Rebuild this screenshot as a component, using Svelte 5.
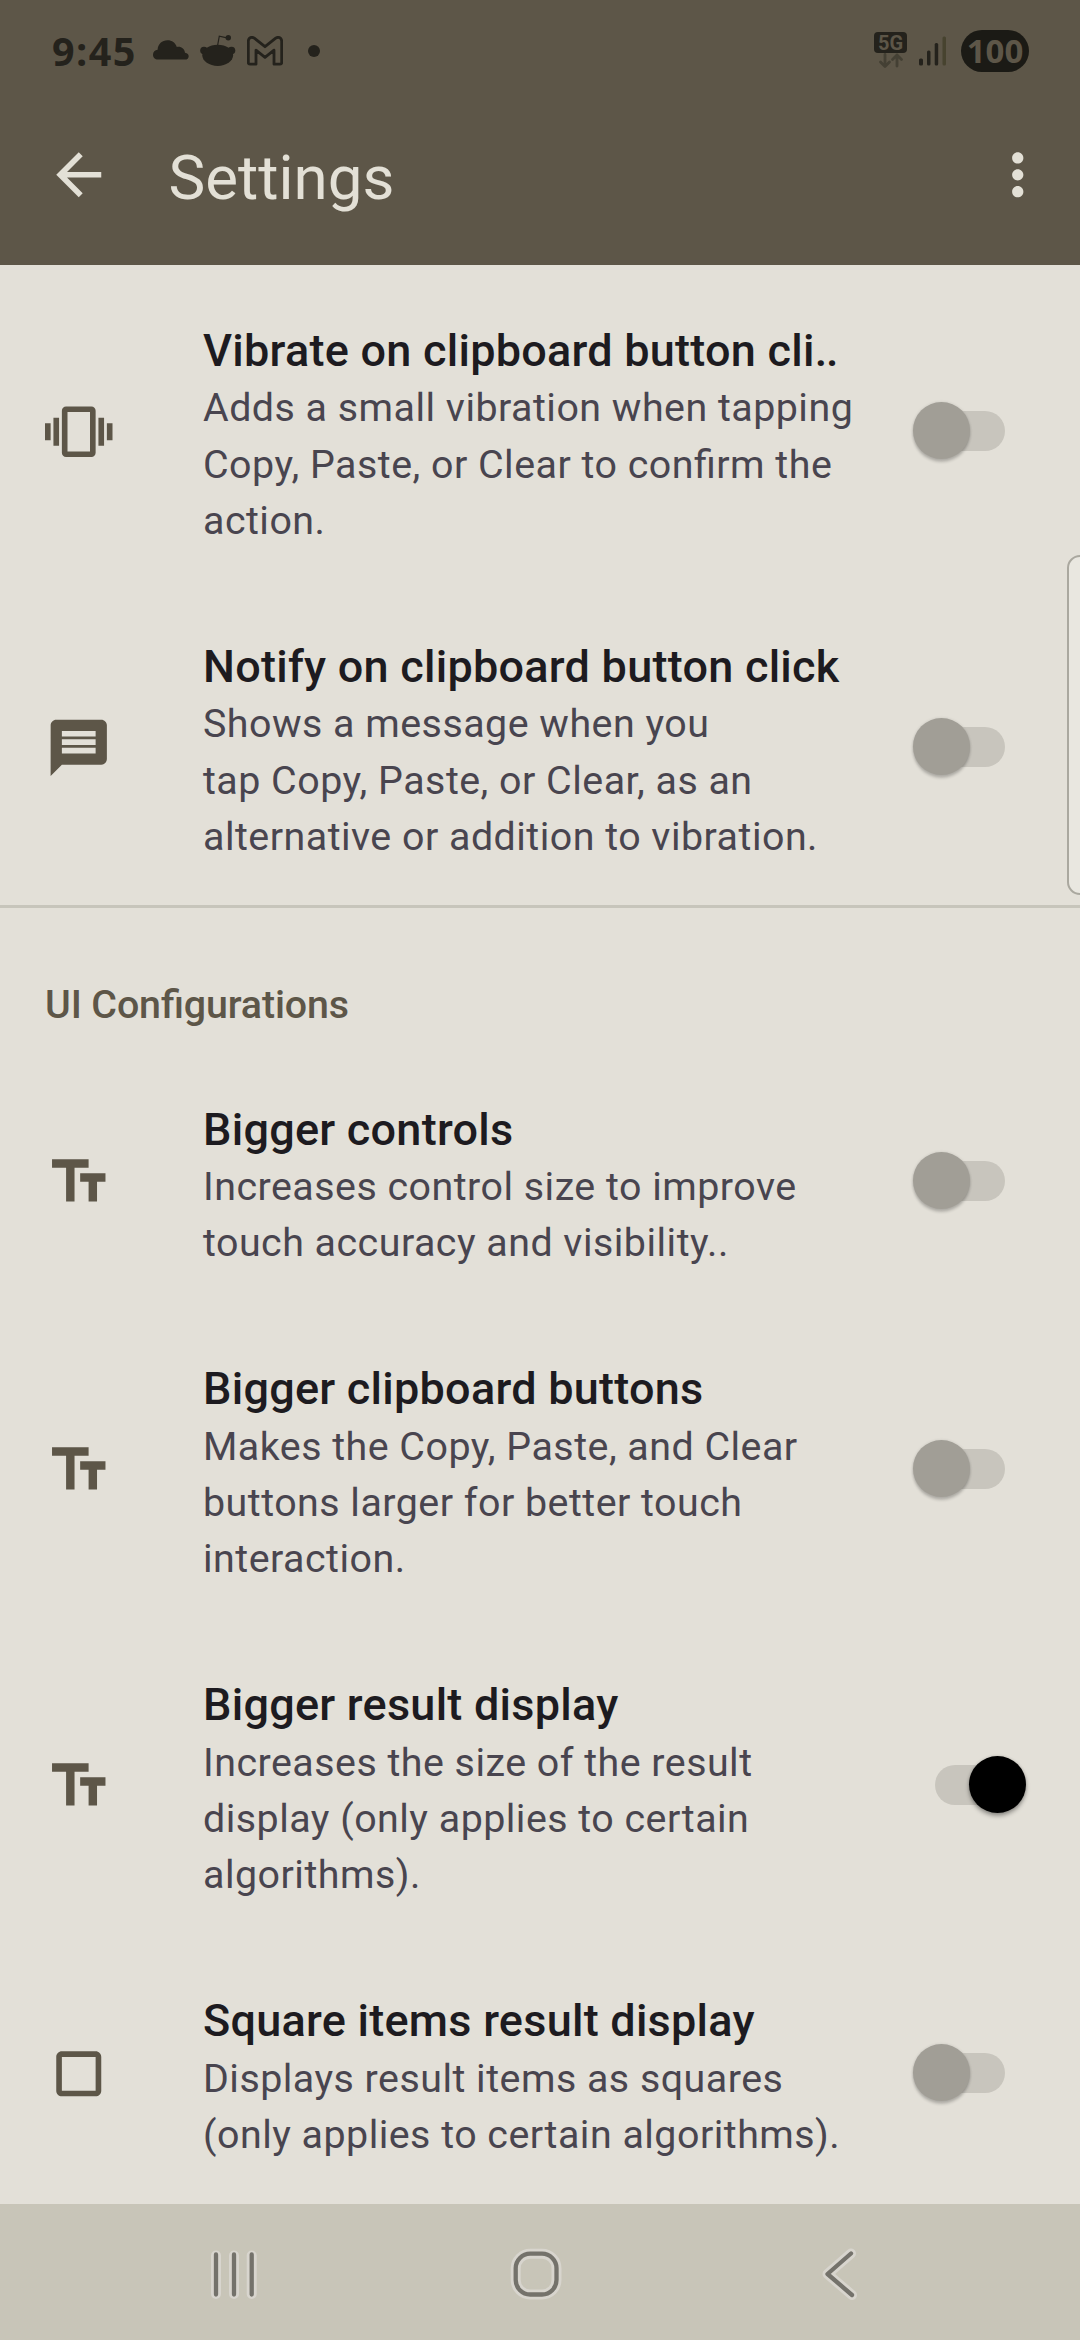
<script>
  const clipboard = [
    { icon: 'vibrate', title: 'Vibrate on clipboard button cli', cut: '..', lines: ['Adds a small vibration when tapping', 'Copy, Paste, or Clear to confirm the', 'action.'], on: false },
    { icon: 'message', title: 'Notify on clipboard button click', lines: ['Shows a message when you', 'tap Copy, Paste, or Clear, as an', 'alternative or addition to vibration.'], on: false }
  ];
  const ui = [
    { icon: 'size', title: 'Bigger controls', lines: ['Increases control size to improve', 'touch accuracy and visibility..'], on: false },
    { icon: 'size', title: 'Bigger clipboard buttons', lines: ['Makes the Copy, Paste, and Clear', 'buttons larger for better touch', 'interaction.'], on: false },
    { icon: 'size', title: 'Bigger result display', lines: ['Increases the size of the result', 'display (only applies to certain', 'algorithms).'], on: true },
    { icon: 'square', title: 'Square items result display', lines: ['Displays result items as squares', '(only applies to certain algorithms).'], on: false }
  ];
  const icons = {
    vibrate: 'M0 15h2V9H0v6zm3 2h2V7H3v10zm19-8v6h2V9h-2zm-3 8h2V7h-2v10zM16.5 3h-9C6.67 3 6 3.67 6 4.5v15c0 .83.67 1.5 1.5 1.5h9c.83 0 1.5-.67 1.5-1.5v-15c0-.83-.67-1.5-1.5-1.5zM16 19H8V5h8v14z',
    message: 'M20 2H4c-1.1 0-1.99.9-1.99 2L2 22l4-4h14c1.1 0 2-.9 2-2V4c0-1.1-.9-2-2-2zm-2 12H6v-2h12v2zm0-3H6V9h12v2zm0-3H6V6h12v2z',
    size: 'M2.5 4v3h5v12h3V7h5V4h-13zm19 5h-9v3h3v7h3v-7h3V9z',
    square: 'M18 4H6c-1.1 0-2 .9-2 2v12c0 1.1.9 2 2 2h12c1.1 0 2-.9 2-2V6c0-1.1-.9-2-2-2zm0 14H6V6h12v12z'
  };
</script>

{#snippet setting(item)}
  <div class="row">
    <svg class="icon" viewBox="0 0 24 24"><path d={icons[item.icon]} /></svg>
    <div class="copy">
      <div class="title">{item.title}{#if item.cut}<span class="cut">{item.cut}</span>{/if}</div>
      {#each item.lines as line}
        <div class="line">{line}</div>
      {/each}
    </div>
    <div class="switch" class:on={item.on}>
      <div class="track"><div class="thumb"></div></div>
    </div>
  </div>
{/snippet}

<div class="screen">
  <header>
    <div class="status">
      <span class="clock">9:45</span>
      <svg class="cloud" width="36" height="20" viewBox="0 0 36 20">
        <path d="M5 19.600C2 19.600 0 17.500 0 14.700C0 12 2 10 4.600 9.700C5 4 9 .3 14.500 .3C19 .3 22.500 3 23.800 6.900C28 6 31.500 8.500 32 12.700C34.500 13 35.700 14.300 35.700 16.200C35.700 18.200 34.300 19.600 32 19.600Z" />
      </svg>
      <svg class="reddit" width="36" height="32" viewBox="0 0 36 32">
        <path class="antenna" d="M17.500 11L19.300 1.200L27 2.800" />
        <circle cx="28.300" cy="2.800" r="2.700" />
        <circle cx="4" cy="15.600" r="3.800" />
        <circle cx="31.500" cy="15.600" r="3.800" />
        <ellipse cx="17.700" cy="20.300" rx="15.400" ry="10.600" />
      </svg>
      <svg class="gmail" width="36" height="30" viewBox="0 0 36 30">
        <path d="M1.300 26.500V5.200C1.300 1.400 5 .4 7.300 2.200L18 10.700L28.700 2.200C31 .4 34.700 1.400 34.700 5.200V26.500Q34.700 28.200 33 28.200H27V14.200L18 21.300L9 14.200V28.200H3Q1.300 28.200 1.300 26.500Z" />
      </svg>
      <span class="dot"></span>
      <span class="spacer"></span>
      <div class="network">
        <span class="badge">5G</span>
        <svg width="26" height="16" viewBox="0 0 26 16"><path d="M7 1.500V13M2.500 9L7 13.500L11.500 9M19 13V2M14.500 6.500L19 2L23.500 6.500" /></svg>
      </div>
      <svg class="signal" width="28" height="30" viewBox="0 0 28 30">
        <rect x="0" y="22.500" width="4" height="7" rx="1.500" />
        <rect x="8" y="14.500" width="3.500" height="15" rx="1.500" />
        <rect x="15.700" y="7" width="3.500" height="22.500" rx="1.500" />
        <rect class="dim" x="23.500" y=".5" width="3.500" height="29" rx="1.500" />
      </svg>
      <span class="battery">100</span>
    </div>
    <div class="appbar">
      <svg class="icon" viewBox="0 0 24 24"><path d="M20 11H7.830l5.590-5.590L12 4l-8 8 8 8 1.410-1.410L7.830 13H20v-2z" /></svg>
      <h1>Settings</h1>
      <svg class="icon" viewBox="0 0 24 24"><path d="M12 8c1.100 0 2-.9 2-2s-.9-2-2-2-2 .9-2 2 .9 2 2 2zm0 2c-1.100 0-2 .9-2 2s.9 2 2 2 2-.9 2-2-.9-2-2-2zm0 6c-1.100 0-2 .9-2 2s.9 2 2 2 2-.9 2-2-.9-2-2-2z" /></svg>
    </div>
  </header>

  <main>
    <section>
      {#each clipboard as item}
        {@render setting(item)}
      {/each}
    </section>
    <hr />
    <h2>UI Configurations</h2>
    {#each ui as item}
      {@render setting(item)}
    {/each}
    <div class="edge-panel"></div>
  </main>

  <nav>
    <svg width="60" height="60" viewBox="0 0 60 60">
      <g class="halo"><path d="M12 11.500V50M30 11.500V50M47.700 11.500V50" /></g>
      <path d="M12 10.500V50.500M30 10.500V50.500M47.700 10.500V50.500" />
    </svg>
    <svg width="60" height="60" viewBox="0 0 60 60">
      <g class="halo"><rect x="9.700" y="9.700" width="40.800" height="40.800" rx="14.500" /></g>
      <rect x="9.700" y="9.700" width="40.800" height="40.800" rx="14.500" />
    </svg>
    <svg width="60" height="60" viewBox="0 0 60 60">
      <g class="halo"><path d="M43 9.500L19.500 30L44 51" /></g>
      <path d="M43 9.500L19.500 30L44 51" />
    </svg>
  </nav>
</div>

<style>
  :global(body) { margin: 0; }
  .screen {
    width: 1080px;
    height: 2340px;
    display: flex;
    flex-direction: column;
    overflow: hidden;
    background: #e3e0d8;
    font-family: Roboto, sans-serif;
  }
  header {
    flex: none;
    height: 265px;
    background: #5d5648;
    color: #e3e0d6;
  }
  .status {
    height: 102px;
    box-sizing: border-box;
    padding: 0 52px;
    display: flex;
    align-items: center;
    color: #24221c;
    fill: #24221c;
  }
  .status svg { flex: none; }
  .clock {
    flex: none;
    width: 101px;
    font: 700 39.5px/44px "Open Sans", sans-serif;
    letter-spacing: 1.4px;
  }
  .cloud { margin-top: -2px; }
  .reddit { margin-left: 11px; }
  .antenna { fill: none; stroke: #24221c; stroke-width: 1.2; }
  .gmail { margin-left: 11px; fill: none; stroke: #24221c; stroke-width: 2.8; stroke-linejoin: round; }
  .dot { width: 12px; height: 12px; margin-left: 25px; border-radius: 50%; background: #24221c; }
  .spacer { flex: 1; }
  .network {
    height: 38px;
    display: flex;
    flex-direction: column;
    align-items: center;
    margin-right: 12px;
  }
  .network svg { fill: none; stroke: #444034; stroke-width: 2.8; stroke-linecap: round; stroke-linejoin: round; }
  .badge {
    width: 33px;
    height: 21px;
    border-radius: 4px;
    background: #24221c;
    color: #5d5648;
    font-weight: 700;
    font-size: 20px;
    line-height: 22px;
    text-align: center;
  }
  .dim { fill: #47432f; }
  .battery {
    width: 68px;
    height: 42px;
    margin-left: 14px;
    margin-right: -1px;
    border-radius: 21px;
    background: #1b1a15;
    color: #5d5648;
    font: 700 33px/42px "Open Sans", sans-serif;
    text-align: center;
  }
  .appbar {
    height: 146px;
    display: flex;
    align-items: center;
    padding: 0 29px 0 45px;
    fill: currentColor;
  }
  h1 {
    flex: 1;
    margin: 0;
    padding: 6px 0 0 56px;
    font-weight: 400;
    font-size: 61.875px;
    line-height: 73px;
  }
  .icon { flex: none; width: 67.5px; height: 67.5px; }
  main { position: relative; flex: 1; overflow: hidden; }
  section { padding-top: 8px; }
  .row {
    display: flex;
    align-items: center;
    padding: 41px 45px 40px;
    fill: #5d5648;
  }
  .copy { flex: 1; margin-left: 90.5px; padding-top: 8px; white-space: nowrap; font-feature-settings: "liga" 1; }
  .title {
    color: #1d1b20;
    font-weight: 500;
    font-size: 45px;
    line-height: 58.25px;
    letter-spacing: 0.25px;
  }
  .cut { letter-spacing: -1.2px; }
  .line {
    color: #49454f;
    font-size: 39.375px;
    line-height: 56.25px;
    letter-spacing: 0.49px;
  }
  .switch { flex: none; width: 121px; padding-bottom: 2px; }
  .track {
    display: flex;
    align-items: center;
    width: 90px;
    height: 40px;
    margin-left: 1px;
    border-radius: 20px;
    background: #c8c5bd;
  }
  .thumb {
    flex: none;
    width: 57px;
    height: 57px;
    margin-left: -2px;
    border-radius: 50%;
    background: #a19e96;
    box-shadow: 0 3px 3px rgba(0, 0, 0, 0.2), 0 0 3px rgba(0, 0, 0, 0.12);
  }
  .on .track { justify-content: flex-end; margin-left: 21px; }
  .on .thumb { margin-right: -1px; background: #000; box-shadow: 0 3px 4px rgba(0, 0, 0, 0.35), 0 0 3px rgba(0, 0, 0, 0.15); }
  hr { height: 3px; margin: 0; border: 0; background: #c7c5bb; }
  h2 {
    height: 143.5px;
    box-sizing: border-box;
    margin: 0;
    padding: 74px 45px 0;
    color: #5d5648;
    font-weight: 500;
    font-size: 39.375px;
    line-height: 46px;
    letter-spacing: -0.12px;
    font-feature-settings: "liga" 1;
  }
  .edge-panel {
    position: absolute;
    top: 290px;
    right: -21px;
    width: 30px;
    height: 336px;
    border: 2.5px solid #aaa89f;
    border-radius: 13px;
    background: #e9e7e0;
  }
  nav {
    flex: none;
    height: 136px;
    display: flex;
    justify-content: center;
    gap: 242px;
    align-items: center;
    padding: 3px 8px 0 0;
    box-sizing: border-box;
    background: #c8c5b8;
  }
  nav svg { fill: none; stroke: #74726b; stroke-width: 4.3; stroke-linecap: round; stroke-linejoin: round; }
  .halo { stroke: #d8d5ce; stroke-width: 10; }
</style>
